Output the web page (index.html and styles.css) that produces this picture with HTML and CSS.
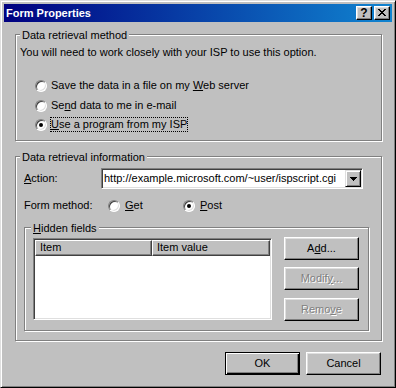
FILE: index.html
```html
<!DOCTYPE html>
<html>
<head>
<meta charset="utf-8">
<link rel="stylesheet" href="styles.css">
</head>
<body>
<div class="window">
  <div class="titlebar">
    <span class="title">Form Properties</span>
    <span class="tbtns">
      <span class="tbtn help">?</span>
      <span class="tbtn close"><svg width="8" height="7" viewBox="0 0 8 7" shape-rendering="crispEdges"><path fill="#000" d="M0 0h2v1h-2z M6 0h2v1h-2z M1 1h2v1h-2z M5 1h2v1h-2z M2 2h4v1h-4z M3 3h2v1h-2z M2 4h4v1h-4z M1 5h2v1h-2z M5 5h2v1h-2z M0 6h2v1h-2z M6 6h2v1h-2z"/></svg></span>
    </span>
  </div>
  <div class="body">
    <div class="group g1">
      <div class="legend">Data retrieval method</div>
      <div class="desc">You will need to work closely with your ISP to use this option.</div>
      <div class="opt r1"><span class="radio"></span><span class="otext">Save the data in a file on my <u>W</u>eb server</span></div>
      <div class="opt r2"><span class="radio"></span><span class="otext">Se<u>n</u>d data to me in e-mail</span></div>
      <div class="opt r3"><span class="radio on"></span><span class="otext focus"><u>U</u>se a program from my ISP</span></div>
    </div>
    <div class="group g2">
      <div class="legend">Data retrieval information</div>
      <div class="row action">
        <span class="rlabel lab-action"><u>A</u>ction:</span>
        <div class="combo">
          <span class="ctext">http://example.microsoft.com/~user/ispscript.cgi</span>
          <span class="dbtn"><svg width="7" height="4" viewBox="0 0 7 4" shape-rendering="crispEdges"><path fill="#000" d="M0 0h7v1h-1v1h-1v1h-1v1h-1v-1h-1v-1h-1v-1h-1z"/></svg></span>
        </div>
      </div>
      <div class="row method">
        <span class="rlabel lab-method">Form method:</span>
        <span class="mopt get"><span class="radio"></span><span class="otext"><u>G</u>et</span></span>
        <span class="mopt"><span class="radio on"></span><span class="otext"><u>P</u>ost</span></span>
      </div>
      <div class="group g3">
        <div class="legend"><u>H</u>idden fields</div>
        <div class="hrow">
          <div class="list">
            <div class="lhead">
              <div class="hcell c1">Item</div>
              <div class="hcell c2">Item value</div>
            </div>
          </div>
          <div class="bcol">
            <div class="btn">A<u>d</u>d...</div>
            <div class="btn disabled b2">Modif<u>y</u>...</div>
            <div class="btn disabled b3">Remo<u>v</u>e</div>
          </div>
        </div>
      </div>
    </div>
    <div class="footer">
      <div class="btn default">OK</div>
      <div class="btn">Cancel</div>
    </div>
  </div>
</div>
</body>
</html>
```
FILE: styles.css
```css
* { box-sizing: border-box; }
body {
  margin: 0;
  font-family: "Liberation Sans", Arial, sans-serif;
  font-size: 11px;
  line-height: 13px;
  color: #000;
}
u { text-decoration: underline; text-underline-offset: 1px; }
.window {
  width: 396px;
  height: 388px;
  background: #c0c0c0;
  border: 1px solid;
  border-color: #dfdfdf #000 #000 #dfdfdf;
  box-shadow: inset 1px 1px #fff, inset -1px -1px #808080;
  padding: 3px;
  display: flex;
  flex-direction: column;
}
.titlebar {
  height: 18px;
  flex: none;
  display: flex;
  align-items: center;
  padding: 0 2px;
  background: linear-gradient(90deg, #000080, #1084d0);
}
.title { color: #fff; font-weight: bold; flex: 1; }
.tbtns { display: flex; gap: 2px; }
.tbtn {
  width: 16px;
  height: 14px;
  background: #c0c0c0;
  border: 1px solid;
  border-color: #fff #000 #000 #fff;
  box-shadow: inset -1px -1px #808080, inset 1px 1px #dfdfdf;
  display: flex;
}
.help { font-weight: bold; justify-content: center; align-items: center; line-height: 12px; font-size: 12px; }
.close { padding: 2px 0 0 3px; }
.close svg { display: block; }
.body {
  flex: 1;
  padding: 12px 0 0 11px;
  display: flex;
  flex-direction: column;
}
.group {
  border: 1px solid #808080;
  box-shadow: 1px 1px 0 #fff, inset 1px 1px 0 #fff;
  display: flex;
  flex-direction: column;
  align-items: flex-start;
  flex: none;
}
.legend {
  background: #c0c0c0;
  padding: 0 2px;
  margin: -6px 0 0 4px;
  height: 13px;
}
.g1 { width: 367px; height: 107px; }
.desc { margin: 4px 0 0 4px; }
.opt { display: flex; align-items: center; height: 13px; margin-left: 19px; }
.r1 { margin-top: 20px; }
.r2 { margin-top: 7px; }
.r3 { margin-top: 6px; }
.otext { margin-left: 4px; white-space: nowrap; }
.focus { outline: 1px dotted #000; outline-offset: 0; }
.radio {
  width: 12px;
  height: 12px;
  flex: none;
  border-radius: 50%;
  background: #fff;
  border: 1px solid;
  border-color: #808080 #fff #fff #808080;
  box-shadow: inset 1px 1px #404040, inset -1px -1px #dfdfdf;
  position: relative;
}
.radio.on::after {
  content: "";
  position: absolute;
  left: 3px;
  top: 3px;
  width: 4px;
  height: 4px;
  border-radius: 50%;
  background: #000;
}
.g2 { width: 367px; height: 185px; margin-top: 15px; }
.row { display: flex; align-items: center; margin-left: 8px; }
.action { margin-top: 4px; height: 21px; }
.lab-action { width: 77px; }
.combo {
  width: 262px;
  height: 21px;
  background: #fff;
  border: 1px solid;
  border-color: #808080 #fff #fff #808080;
  box-shadow: inset 1px 1px #404040, inset -1px -1px #dfdfdf;
  padding: 1px 1px 1px 2px;
  display: flex;
  align-items: center;
}
.ctext { flex: 1; white-space: nowrap; overflow: hidden; }
.dbtn {
  width: 16px;
  height: 17px;
  background: #c0c0c0;
  border: 1px solid;
  border-color: #dfdfdf #000 #000 #dfdfdf;
  box-shadow: inset 1px 1px #fff, inset -1px -1px #808080;
  display: flex;
  align-items: center;
  justify-content: center;
}
.dbtn svg { display: block; margin-left: 1px; }
.method { margin-top: 10px; height: 13px; }
.lab-method { width: 84px; }
.mopt { display: flex; align-items: center; }
.mopt .otext { margin-left: 5px; }
.get { width: 75px; }
.g3 { width: 345px; height: 104px; margin: 15px 0 0 8px; }
.g3 .legend { margin-left: 6px; }
.hrow { display: flex; align-items: flex-start; margin-top: 2px; padding-left: 8px; gap: 12px; }
.list {
  width: 239px;
  height: 82px;
  margin-top: 1px;
  background: #fff;
  border: 1px solid;
  border-color: #808080 #fff #fff #808080;
  box-shadow: inset 1px 1px #404040, inset -1px -1px #dfdfdf;
  padding: 1px;
}
.lhead { display: flex; }
.hcell {
  height: 16px;
  background: #c0c0c0;
  border: 1px solid;
  border-color: #fff #404040 #404040 #fff;
  box-shadow: inset -1px -1px #808080;
  padding-left: 4px;
}
.c1 { width: 117px; }
.c2 { flex: 1; }
.bcol { display: flex; flex-direction: column; }
.btn {
  width: 75px;
  height: 23px;
  background: #c0c0c0;
  border: 1px solid;
  border-color: #fff #000 #000 #fff;
  box-shadow: inset -1px -1px #808080, inset 1px 1px #dfdfdf;
  display: flex;
  align-items: center;
  justify-content: center;
  white-space: nowrap;
}
.b2 { margin-top: 7px; }
.b3 { margin-top: 8px; }
.disabled { color: #808080; text-shadow: 1px 1px 0 #fff; }
.btn.default {
  border-color: #000;
  box-shadow: inset 1px 1px #fff, inset -1px -1px #000, inset -2px -2px #808080;
}
.footer {
  display: flex;
  justify-content: flex-end;
  gap: 6px;
  margin-top: 11px;
  padding-right: 11px;
}
```
